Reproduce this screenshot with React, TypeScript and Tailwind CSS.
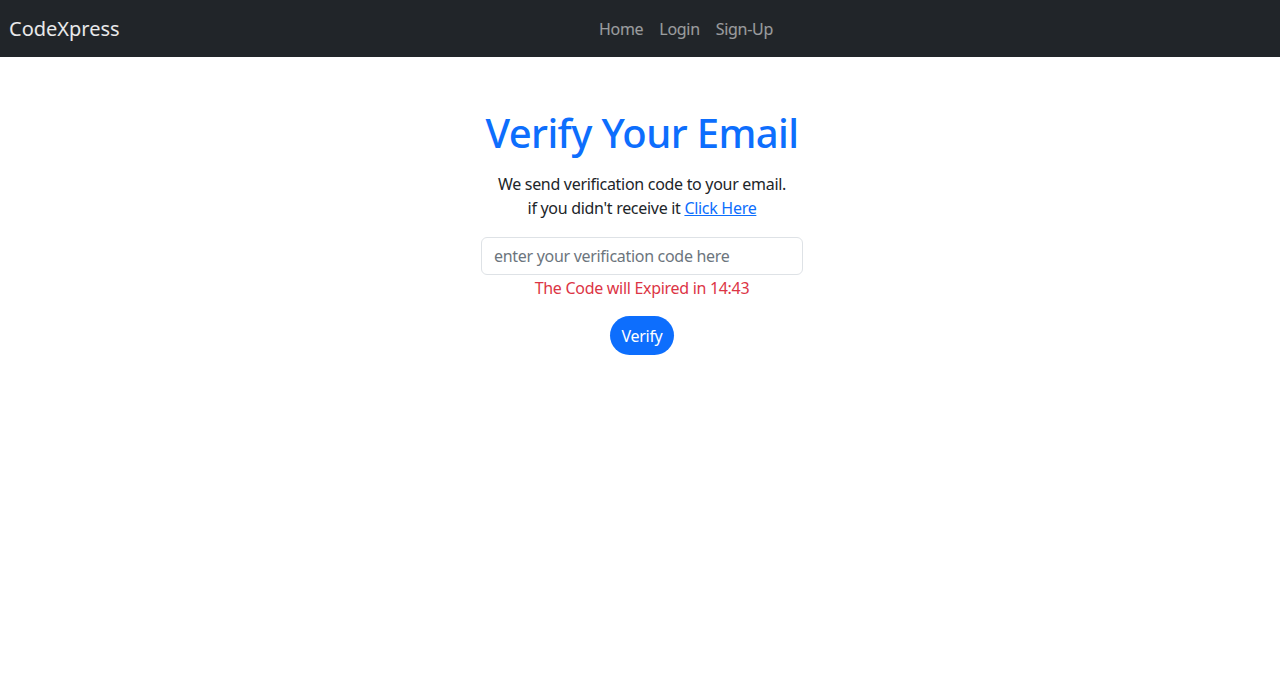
export default function App() {
  return (
    <div className="min-h-screen bg-white text-[#212529]" style={{ fontFamily: '"Segoe UI", "Noto Sans", sans-serif' }}>
      {/* Navbar */}
      <nav className="h-[57px] bg-[#212529] flex items-center px-[9px]">
        <a className="text-[20px] text-white/90 leading-[30px] mr-auto">CodeXpress</a>
        <div className="flex items-center gap-4 text-[16px] text-white/55 tracking-[-0.3px] mr-[498px]">
          <a>Home</a>
          <a>Login</a>
          <a>Sign-Up</a>
        </div>
      </nav>

      {/* Verify box */}
      <div className="flex flex-col items-center pt-[52px] pl-[4px]">
        <h1 className="text-[40px] font-medium leading-[48px] tracking-[-0.6px] text-[#0d6efd]">Verify Your Email</h1>
        <p className="mt-[15px] text-[16px] leading-[24px] tracking-[-0.3px] text-center text-[#212529]">
          We send verification code to your email.
          <br />
          if you didn't receive it{" "}
          <a className="text-[#0d6efd] underline">Click Here</a>
        </p>
        <input
          className="mt-[17px] w-[322px] h-[38px] border border-[#dee2e6] rounded-[6px] px-3 text-[16px] tracking-[-0.3px] placeholder:text-[#6c757d] outline-none"
          placeholder="enter your verification code here"
        />
        <p className="mt-[1px] text-[16px] leading-[24px] tracking-[-0.3px] text-[#dc3545]">The Code will Expired in 14:43</p>
        <button className="mt-[16px] h-[39px] px-3 rounded-full bg-[#0d6efd] text-white text-[16px] tracking-[-0.3px]">Verify</button>
      </div>
    </div>
  );
}
